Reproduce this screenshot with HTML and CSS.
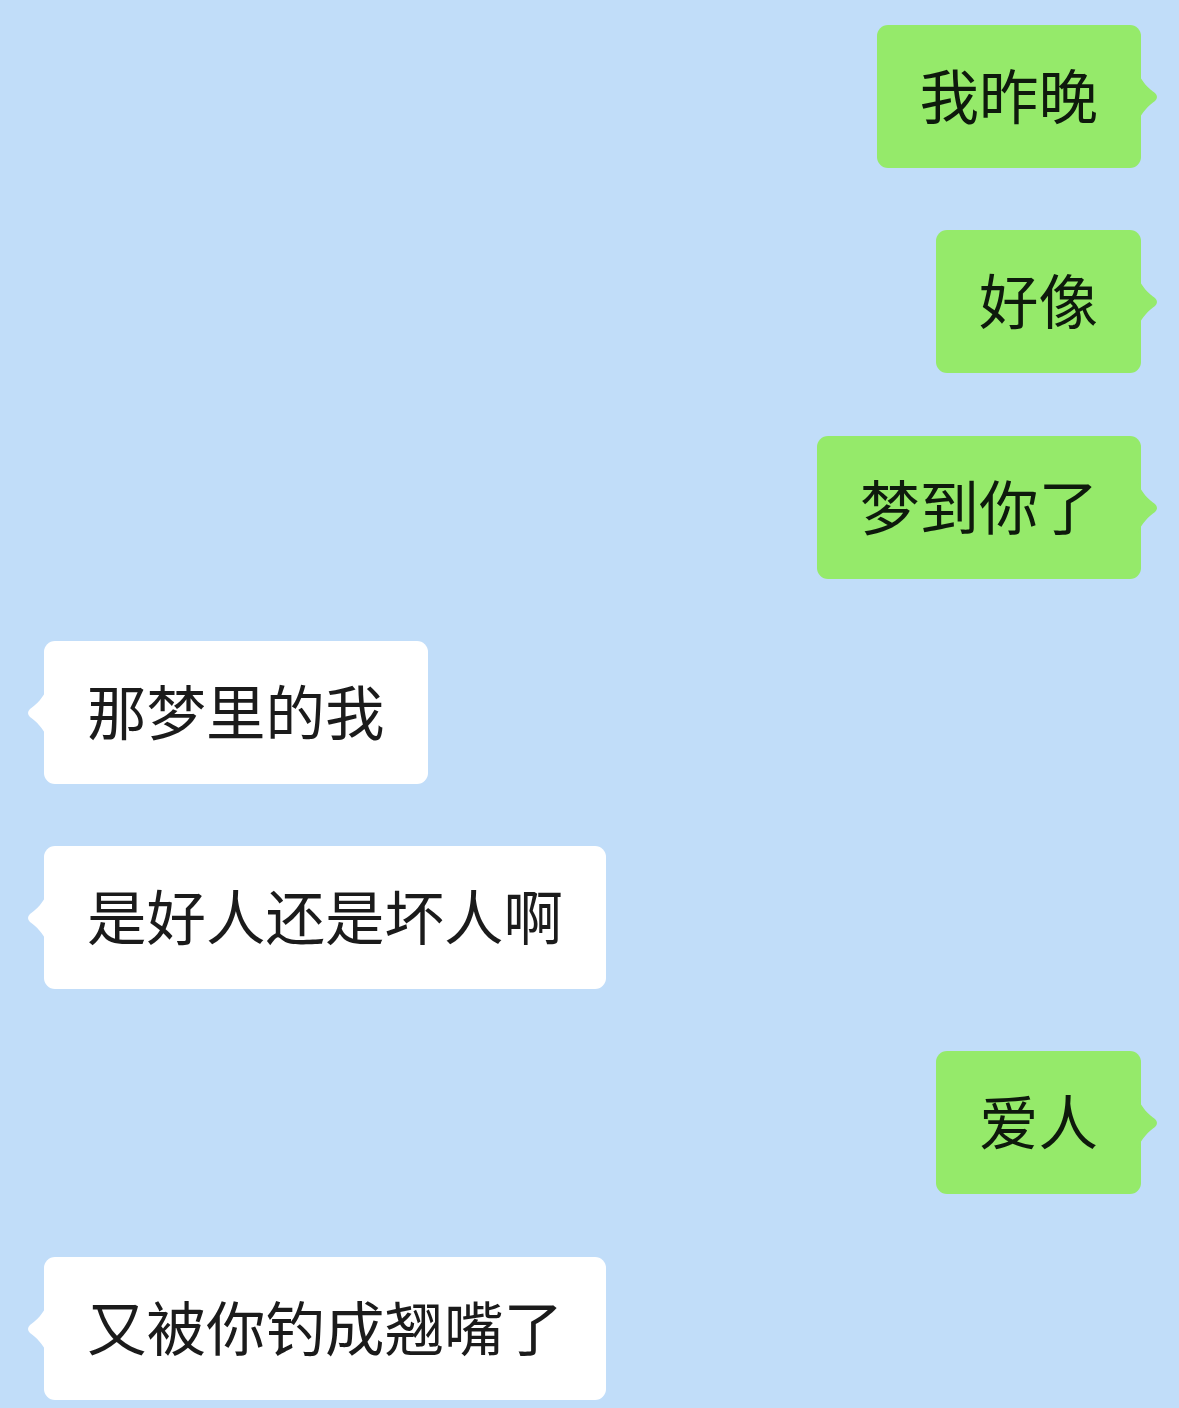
FILE: index.html
```html
<!DOCTYPE html>
<html lang="zh-CN">
<head>
<meta charset="utf-8">
<title>聊天</title>
<link rel="stylesheet" href="styles.css">
</head>
<body>
<div class="chat">
  <div class="msg out">我昨晚<svg class="tail" viewBox="0 0 22 50"><path d="M0 0 C3 9 11 17 17 21 Q21 25 17 29 C11 33 3 41 0 50 Z"/></svg></div>
  <div class="msg out">好像<svg class="tail" viewBox="0 0 22 50"><path d="M0 0 C3 9 11 17 17 21 Q21 25 17 29 C11 33 3 41 0 50 Z"/></svg></div>
  <div class="msg out">梦到你了<svg class="tail" viewBox="0 0 22 50"><path d="M0 0 C3 9 11 17 17 21 Q21 25 17 29 C11 33 3 41 0 50 Z"/></svg></div>
  <div class="msg in">那梦里的我<svg class="tail" viewBox="0 0 22 50"><path d="M22 0 C19 9 11 17 5 21 Q1 25 5 29 C11 33 19 41 22 50 Z"/></svg></div>
  <div class="msg in">是好人还是坏人啊<svg class="tail" viewBox="0 0 22 50"><path d="M22 0 C19 9 11 17 5 21 Q1 25 5 29 C11 33 19 41 22 50 Z"/></svg></div>
  <div class="msg out">爱人<svg class="tail" viewBox="0 0 22 50"><path d="M0 0 C3 9 11 17 17 21 Q21 25 17 29 C11 33 3 41 0 50 Z"/></svg></div>
  <div class="msg in">又被你钓成翘嘴了<svg class="tail" viewBox="0 0 22 50"><path d="M22 0 C19 9 11 17 5 21 Q1 25 5 29 C11 33 19 41 22 50 Z"/></svg></div>
</div>
</body>
</html>
```
FILE: styles.css
```css
html, body {
  margin: 0;
  padding: 0;
  background: #c1ddf9;
}
body {
  width: 1179px;
  height: 1408px;
  overflow: hidden;
  font-family: "Noto Sans CJK SC", "Noto Sans", sans-serif;
}
.chat {
  display: flex;
  flex-direction: column;
  padding-top: 25px;
  gap: 62.3px;
}
.msg {
  position: relative;
  height: 143px;
  line-height: 137px;
  font-size: 59.5px;
  padding: 0 43px 6px 43px;
  border-radius: 11px;
  white-space: nowrap;
  box-sizing: border-box;
}
.msg.out {
  align-self: flex-end;
  margin-right: 38px;
  background: #95ea6a;
  color: #0e1a0c;
}
.msg.in {
  align-self: flex-start;
  margin-left: 44px;
  background: #ffffff;
  color: #1b1b1b;
}
.tail {
  position: absolute;
  top: 47px;
  width: 22px;
  height: 50px;
}
.out .tail {
  right: -19px;
  fill: #95ea6a;
}
.in .tail {
  left: -19px;
  fill: #ffffff;
}
```
